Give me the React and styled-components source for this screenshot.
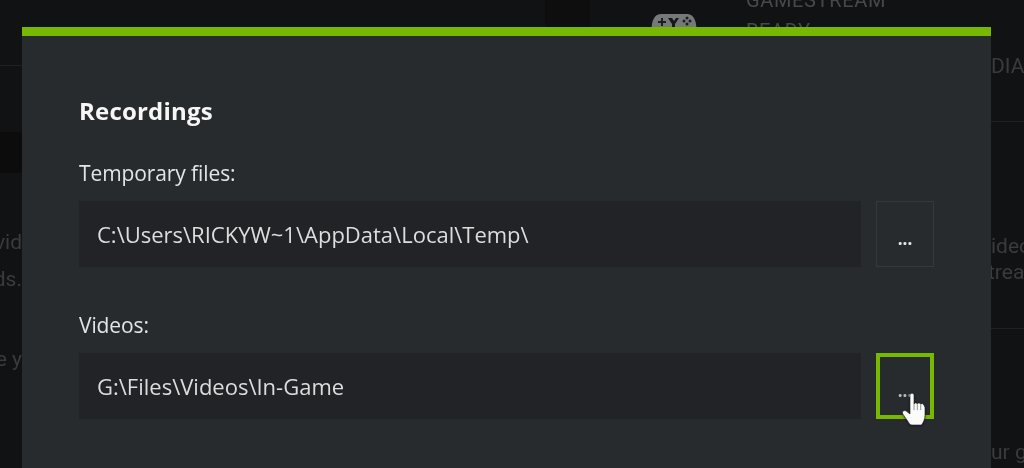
import React from "react";
import styled, { createGlobalStyle } from "styled-components";

const Global = createGlobalStyle`
  html, body { margin: 0; padding: 0; height: 468px; overflow: hidden; background: #111213; }
  #root { height: 468px; }
  * { box-sizing: border-box; }
`;

const Page = styled.div`
  position: relative;
  width: 1024px;
  height: 468px;
  overflow: hidden;
  background: #111213;
  font-family: "Open Sans", "Liberation Sans", sans-serif;
  filter: blur(0.45px);
`;

const Backdrop = styled.div`
  display: grid;
  grid-template-columns: 22px 1fr 39px;
  height: 468px;
  color: #3a3b3d;
  font-family: "Roboto", "Liberation Sans", sans-serif;
  font-size: 21px;
  filter: blur(0.5px);
`;

const EdgeLeft = styled.div`
  display: flex;
  flex-direction: column;
  overflow: hidden;
`;

const EdgeRight = styled.div`
  display: flex;
  flex-direction: column;
  overflow: hidden;
`;

const Rule = styled.div`
  height: 1px;
  flex: none;
  margin-top: ${(p) => p.$top}px;
  background: #202122;
`;

const ShadeBlock = styled.div`
  height: 41px;
  flex: none;
  margin-top: 66px;
  background: #0c0c0d;
`;

const SnippetLeft = styled.div`
  display: flex;
  justify-content: flex-end;
  flex: none;
  height: 28px;
  line-height: 28px;
  white-space: nowrap;
  margin-top: ${(p) => p.$top}px;
`;

const SnippetRight = styled.div`
  flex: none;
  height: 28px;
  line-height: 28px;
  white-space: nowrap;
  padding-left: ${(p) => p.$inset}px;
  margin-top: ${(p) => p.$top}px;
`;

const Middle = styled.div`
  display: flex;
  align-items: flex-start;
  height: 27px;
  overflow: hidden;
`;

const DarkTile = styled.div`
  width: 45px;
  height: 27px;
  margin-left: 523px;
  background: #0e0e0f;
`;

const PadIcon = styled.svg`
  width: 46px;
  height: 30px;
  margin: 12px 0 0 61px;
  flex: none;
`;

const StreamText = styled.div`
  margin: -15px 0 0 49px;
  font-size: 20px;
  line-height: 31px;
  letter-spacing: 0.65px;
  color: #47484a;
`;

const Modal = styled.section`
  position: absolute;
  left: 22px;
  top: 27px;
  width: 969px;
  height: 441px;
  padding: 60px 57px 0;
  background: #282b2e;
  border-top: 9px solid #76b900;
  color: #e4e5e6;
`;

const Title = styled.h2`
  margin: 0 0 34px;
  font-size: 24px;
  line-height: 30px;
  font-weight: 700;
  color: #f6f6f6;
  font-family: "Open Sans", sans-serif;
  letter-spacing: 0.2px;
`;

const Group = styled.div`
  margin-bottom: 45px;
`;

const Label = styled.div`
  font-size: 21px;
  line-height: 26px;
  margin-bottom: 15px;
  letter-spacing: -0.1px;
`;

const Row = styled.div`
  display: flex;
  gap: 15px;
  height: 66px;
`;

const Field = styled.div`
  width: 782px;
  padding-left: 18px;
  display: flex;
  align-items: center;
  background: #212326;
  font-size: 22px;
  color: #dcdddd;
`;

const Browse = styled.button`
  width: 58px;
  padding: 8px 0 0;
  background: transparent;
  border: ${(p) => (p.$active ? "4px solid #76b900" : "1px solid #36393c")};
  color: ${(p) => (p.$active ? "#b4b6b8" : "#e4e5e6")};
  font: 700 17px/1 "Open Sans", sans-serif;
  display: flex;
  align-items: center;
  justify-content: center;
`;

const Hand = styled.svg`
  position: absolute;
  left: 880px;
  top: 357px;
  width: 24px;
  height: 32px;
  filter: drop-shadow(0 1px 1px rgba(0, 0, 0, 0.45));
`;

export default function App() {
  return (
    <Page>
      <Global />
      <Backdrop>
        <EdgeLeft>
          <Rule $top={65} />
          <ShadeBlock />
          <SnippetLeft $top={55}>vid</SnippetLeft>
          <SnippetLeft $top={9}>ds.</SnippetLeft>
          <SnippetLeft $top={52}>e y</SnippetLeft>
        </EdgeLeft>
        <Middle>
          <DarkTile />
          <PadIcon viewBox="0 0 46 30">
            <path
              d="M10 2h26c5 0 8 4 9 10l1 9c0 5-5 8-9 5l-6-5H15l-6 5c-4 3-9 0-9-5l1-9C2 6 5 2 10 2z"
              fill="#77787a"
            />
            <path d="M15 8l4 6v4h3v-4l4-6h-3l-2 3-2-3z" transform="translate(2 -2)" fill="#17181a" />
            <path d="M7 9h3V6h2v3h3v2h-3v3h-2v-3H7z" fill="#1d1e20" />
            <circle cx="36" cy="6" r="1.5" fill="#1d1e20" />
            <circle cx="36" cy="12" r="1.5" fill="#1d1e20" />
            <circle cx="33" cy="9" r="1.5" fill="#1d1e20" />
            <circle cx="39" cy="9" r="1.5" fill="#1d1e20" />
          </PadIcon>
          <StreamText>
            GAMESTREAM
            <br />
            READY
          </StreamText>
        </Middle>
        <EdgeRight>
          <SnippetRight $top={52} $inset={6}>DIA</SnippetRight>
          <Rule $top={41} />
          <SnippetRight $top={110} $inset={6}>ideo</SnippetRight>
          <SnippetRight $top={-2} $inset={3}>trea</SnippetRight>
          <Rule $top={42} />
          <SnippetRight $top={109} $inset={6}>ur g</SnippetRight>
        </EdgeRight>
      </Backdrop>
      <Modal>
        <Title>Recordings</Title>
        <Group>
          <Label>Temporary files:</Label>
          <Row>
            <Field>C:\Users\RICKYW~1\AppData\Local\Temp\</Field>
            <Browse>...</Browse>
          </Row>
        </Group>
        <Group>
          <Label>Videos:</Label>
          <Row>
            <Field>G:\Files\Videos\In-Game</Field>
            <Browse $active>...</Browse>
          </Row>
        </Group>
        <Hand viewBox="0 0 24 32">
          <path
            d="M8 2.500c0-3 4-3 4 0V11c.5-1.500 3-1.500 3.300 0 .5-1.500 3-1.500 3.400.3.5-1 3-1 3.300 1l1 2.200V22c0 4-1.500 7-3.500 10H10c-2 0-3-1.500-4-3.500L.8 21c-1.300-2.500 1.700-4.500 3.700-2.700L8 21z"
            fill="#fbfbfb"
            stroke="#1b1c1e"
            strokeWidth="0.6"
          />
          <path d="M12 11v6M15.300 11v6M18.700 11.500V17" stroke="#85878a" strokeWidth="0.9" fill="none" />
        </Hand>
      </Modal>
    </Page>
  );
}
